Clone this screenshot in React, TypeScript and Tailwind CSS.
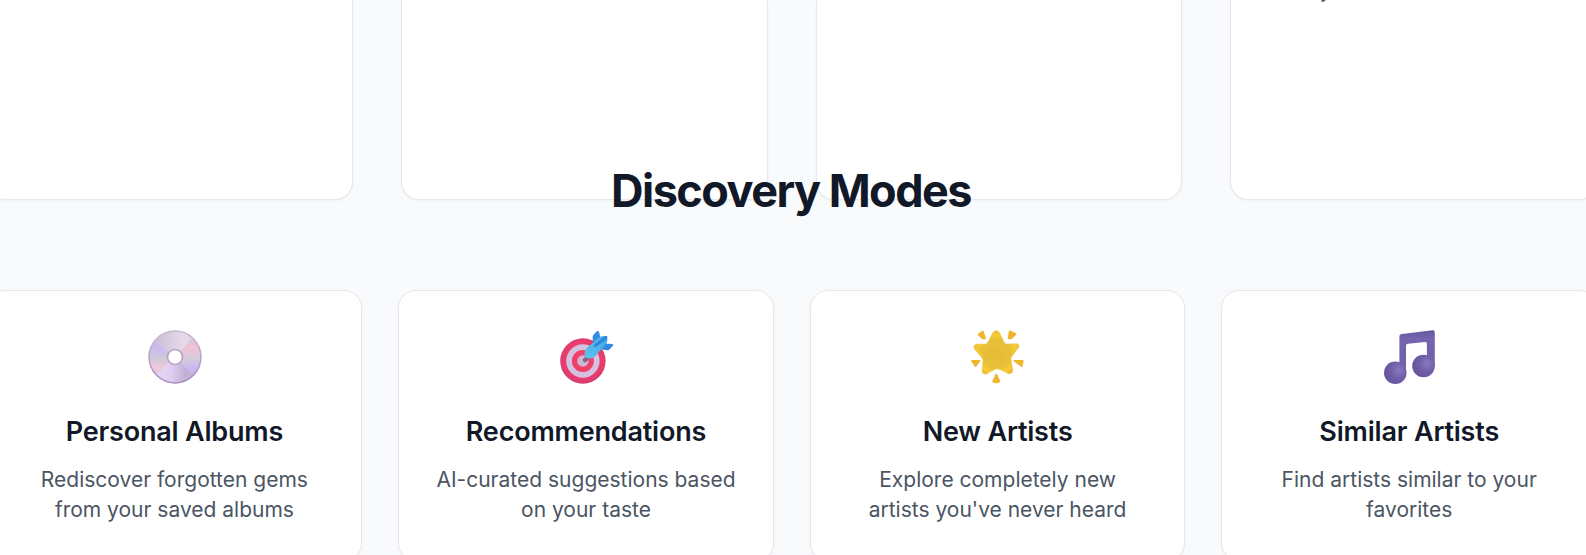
import React from "react";

function Disc() {
  return (
    <svg width="54" height="54" viewBox="0 0 54 54">
      <defs>
        <linearGradient id="discTop" x1="0" y1="0" x2="1" y2="0">
          <stop offset="0" stopColor="#c9bdd3" />
          <stop offset=".45" stopColor="#dccfe2" />
          <stop offset=".7" stopColor="#e6daec" />
          <stop offset="1" stopColor="#d8cbe0" />
        </linearGradient>
        <linearGradient id="discBottom" x1="0" y1="0" x2="1" y2="0">
          <stop offset="0" stopColor="#e6d5fa" />
          <stop offset=".35" stopColor="#e0cff2" />
          <stop offset=".7" stopColor="#c3afd5" />
          <stop offset="1" stopColor="#c6b2da" />
        </linearGradient>
        <linearGradient id="discLeft" x1="0" y1="0" x2="0" y2="1">
          <stop offset="0" stopColor="#cdbfdc" />
          <stop offset=".25" stopColor="#ccb9f0" />
          <stop offset=".5" stopColor="#ccc9dc" />
          <stop offset=".8" stopColor="#efc9d9" />
          <stop offset="1" stopColor="#dfc5e0" />
        </linearGradient>
        <linearGradient id="discRight" x1="0" y1="0" x2="0" y2="1">
          <stop offset="0" stopColor="#d9c3d8" />
          <stop offset=".25" stopColor="#f0c3d5" />
          <stop offset=".55" stopColor="#d3cbdb" />
          <stop offset=".8" stopColor="#cbb8f5" />
          <stop offset="1" stopColor="#c4b0dc" />
        </linearGradient>
        <linearGradient id="discRim" x1="0" y1="0" x2="0" y2="1">
          <stop offset="0" stopColor="#c9bccd" />
          <stop offset="1" stopColor="#a98fc0" />
        </linearGradient>
        <clipPath id="discClip"><circle cx="27" cy="27" r="26.5" /></clipPath>
      </defs>
      <g clipPath="url(#discClip)">
        <path d="M27 27 4 8V0h46v4Z" fill="url(#discTop)" />
        <path d="M27 27 8 46v8h42v-8Z" fill="url(#discBottom)" />
        <path d="M27 27 6 9H0v36h9Z" fill="url(#discLeft)" />
        <path d="M27 27 45 8h9v38h-8Z" fill="url(#discRight)" />
      </g>
      <circle cx="27" cy="27" r="25.9" fill="none" stroke="url(#discRim)" strokeWidth="1.5" />
      <circle cx="27" cy="27" r="7.5" fill="#fff" stroke="#b9a4c8" strokeWidth="1.7" />
    </svg>
  );
}

function Target() {
  return (
    <svg width="54" height="54" viewBox="0 0 54 54">
      <defs>
        <radialGradient id="targetRed" cx=".5" cy=".47" r=".54">
          <stop offset=".8" stopColor="#ea3c6c" />
          <stop offset="1" stopColor="#c8406f" />
        </radialGradient>
        <linearGradient id="dart" x1="1" y1="0" x2="0" y2="1">
          <stop offset="0" stopColor="#3ea5ee" />
          <stop offset="1" stopColor="#5cc3ea" />
        </linearGradient>
      </defs>
      <circle cx="22.9" cy="31" r="22.7" fill="url(#targetRed)" />
      <circle cx="22.9" cy="31" r="16.7" fill="#d3c1df" />
      <circle cx="22.9" cy="31" r="11" fill="#f0406a" />
      <circle cx="22.9" cy="31" r="5.7" fill="#cdb9d4" />
      <path d="m25 30 3-2.5" stroke="#8a6683" strokeWidth="4.5" strokeLinecap="round" />
      <path d="M33 12.500 32.600 7q0-1.500 1.400-2.800L36.500 1.500Q38 .3 39 2l1.500 6Z" fill="#348ae2" />
      <path d="M44.500 13.500 52 14q2 .4.700 2l-3.500 3.700q-1 .8-2.700.6l-8-1.500Z" fill="#348ae2" />
      <path d="M26.500 18.500 38.500 7.500q4.500-2.500 8.500-1 1 3-.3 6.500L36 25.500q-3.500 3.500-7.500 3-4-.8-4-5 0-2.500 2-5Z" fill="url(#dart)" />
      <path d="m35.500 15.500 10.500-8.200" stroke="#2e82d8" strokeWidth="2.800" strokeLinecap="round" />
    </svg>
  );
}

function GlowingStar() {
  return (
    <svg width="54" height="54" viewBox="0 0 54 54">
      <defs>
        <radialGradient id="star" cx=".5" cy=".53" r=".58">
          <stop offset="0" stopColor="#e3bb36" />
          <stop offset=".55" stopColor="#e8c038" />
          <stop offset=".78" stopColor="#f8cb35" />
          <stop offset="1" stopColor="#e6a92d" />
        </radialGradient>
      </defs>
      <path d="M21.800 2.800q3.400-4 6.800 0l4.600 9.700q.8 1.700 3 1.600l9.300-.3q3.800.8 1.600 4.400l-6.300 8.200q-1.300 1.800-.6 4l1.500 8.800q.2 5-4.300 4.400l-8.200-4q-3.200-1.600-6.200.1l-7.500 4.300q-5 .4-4.300-4.400l.8-8.500q.2-2-1.200-3.700L3.800 19.500q-2.300-4 1.700-5.400l8.600.1q2 0 2.800-1.900Z" fill="url(#star)" stroke="url(#star)" strokeWidth=".6" />
      <g fill="#efb52e" stroke="#efb52e" strokeWidth="1.8" strokeLinejoin="round">
        <path d="m7.500 4.500 4.300-3 2.200 6.800h-2.200ZM37.500 8.300l1.300-7L44.500 4l-4.300 4.300ZM1 30.800h7.500L4.500 36ZM43.500 30.800h8.300l-1.200 5.200ZM25.300 44.500l3.200 7q-3.200 1.500-6.400 0Z" />
      </g>
    </svg>
  );
}

function Notes() {
  return (
    <svg width="54" height="54" viewBox="0 0 54 54">
      <defs>
        <radialGradient id="note" cx=".66" cy=".38" r=".62">
          <stop offset="0" stopColor="#8879bf" />
          <stop offset=".5" stopColor="#7262aa" />
          <stop offset="1" stopColor="#68569e" />
        </radialGradient>
        <linearGradient id="noteBeam" x1="0" y1="0" x2="0" y2="1">
          <stop offset="0" stopColor="#66579b" />
          <stop offset=".2" stopColor="#7564ae" />
          <stop offset="1" stopColor="#6f5fa8" />
        </linearGradient>
      </defs>
      <path d="M16.400 6.500Q16.400 4 19 4L49.500.3q2.300-.2 2.300 2.200V37h-7.900V14q0-2-1.900-1.900l-17 1.600q-2 .2-2 2V43h-6.600Z" fill="url(#noteBeam)" />
      <circle cx="12.3" cy="42.700" r="11.3" fill="url(#note)" />
      <circle cx="40.5" cy="36" r="11.3" fill="url(#note)" />
    </svg>
  );
}

const modes = [
  { icon: <Disc />, title: "Personal Albums", lines: ["Rediscover forgotten gems", "from your saved albums"] },
  { icon: <Target />, title: "Recommendations", lines: ["AI-curated suggestions based", "on your taste"] },
  { icon: <GlowingStar />, title: "New Artists", lines: ["Explore completely new", "artists you've never heard"] },
  { icon: <Notes />, title: "Similar Artists", lines: ["Find artists similar to your", "favorites"] },
];

export default function App() {
  return (
    <main className="flex h-[555px] w-full flex-col overflow-hidden bg-[#f9fafc] font-['Inter',sans-serif]">
      <div className="-ml-[13.4px] grid h-[200px] w-[1610.4px] shrink-0 grid-cols-4 gap-12">
        {[0, 1, 2, 3].map((i) => (
          <div key={i} className="overflow-hidden rounded-b-[18px] border border-t-0 border-[#e5e7eb] bg-white text-center text-[21px] leading-[30px] text-[#4b5563] shadow-[0_1px_3px_rgba(0,0,0,0.04)]">
            {i === 3 && <p className="-mt-[25px] mr-[176px]">y</p>}
          </div>
        ))}
      </div>
      <h2 className="z-10 -mt-[36px] -ml-[4px] h-[54px] shrink-0 text-center text-[45px] leading-[54px] font-bold tracking-[-0.034em] text-[#111827]">
        Discovery Modes
      </h2>
      <div className="mt-[72px] -ml-[13.4px] grid h-[271px] w-[1610.4px] shrink-0 grid-cols-4 gap-9">
        {modes.map((m) => (
          <article key={m.title} className="flex flex-col items-center rounded-[18px] border border-[#e5e7eb] bg-white pt-[39px] text-center shadow-[0_1px_3px_rgba(0,0,0,0.04)]">
            <div className="ml-px">{m.icon}</div>
            <h3 className="mt-[27px] text-[27px] leading-[42px] font-semibold tracking-[-0.007em] text-[#111827]">{m.title}</h3>
            <p className="mt-[12px] text-[21px] leading-[30px] text-[#4b5563]">
              {m.lines[0]}
              <br />
              {m.lines[1]}
            </p>
          </article>
        ))}
      </div>
    </main>
  );
}
